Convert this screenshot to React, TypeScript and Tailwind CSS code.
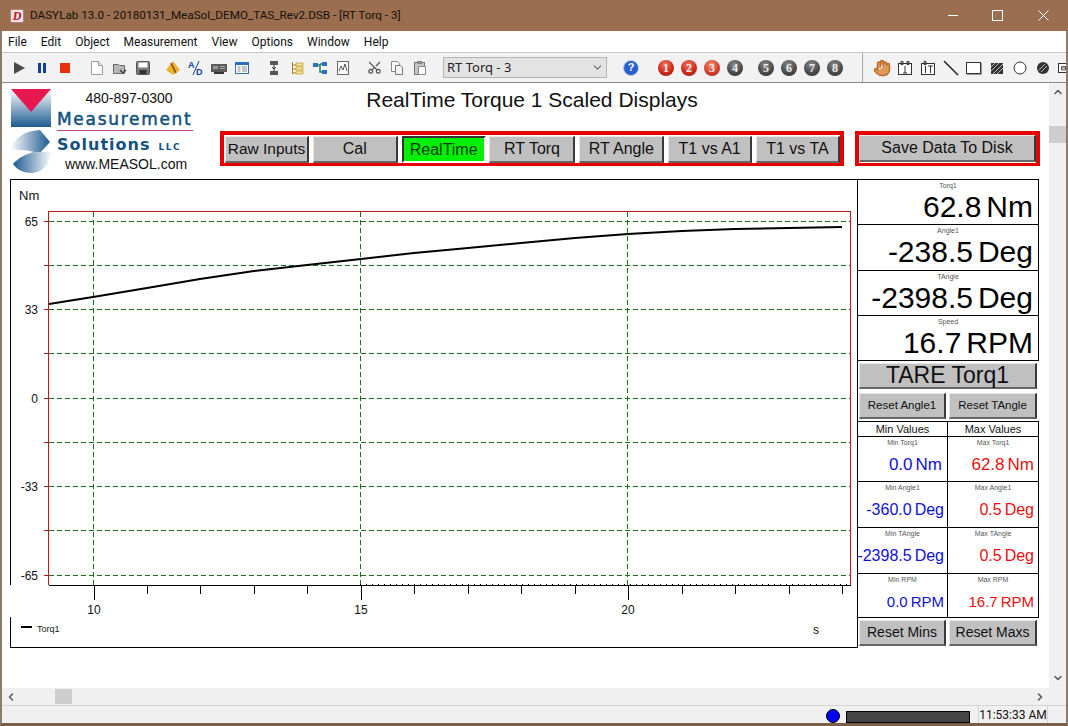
import { ChevronDown, ChevronLeft, ChevronRight, ChevronUp, Hand, Scissors } from 'lucide-react'

const menus = ['File', 'Edit', 'Object', 'Measurement', 'View', 'Options', 'Window', 'Help']

const navButtons = [
  { label: 'Raw Inputs', width: 'w-[84px]', size: 'text-[15.5px]' },
  { label: 'Cal', width: 'w-[85px]', size: 'text-[16px]' },
  { label: 'RealTime', width: 'w-[84px]', size: 'text-[16px]', active: true },
  { label: 'RT Torq', width: 'w-[86px]', size: 'text-[16px]' },
  { label: 'RT Angle', width: 'w-[85px]', size: 'text-[16px]' },
  { label: 'T1 vs A1', width: 'w-[84px]', size: 'text-[16px]' },
  { label: 'T1 vs TA', width: 'w-[84px]', size: 'text-[16px]' },
]

const displays = [
  { name: 'Torq1', value: '62.8', unit: 'Nm', h: 'h-[45px]' },
  { name: 'Angle1', value: '-238.5', unit: 'Deg', h: 'h-[46px]' },
  { name: 'TAngle', value: '-2398.5', unit: 'Deg', h: 'h-[45px]' },
  { name: 'Speed', value: '16.7', unit: 'RPM', h: 'h-[45px]' },
]

const minMaxRows = [
  { h: 'h-[45px]', size: 'text-[17px]', minPr: 'pr-[5px]', min: ['Min Torq1', '0.0', 'Nm'], max: ['Max Torq1', '62.8', 'Nm'] },
  { h: 'h-[46px]', size: 'text-[16px]', minPr: 'pr-[3px]', min: ['Min Angle1', '-360.0', 'Deg'], max: ['Max Angle1', '0.5', 'Deg'] },
  { h: 'h-[46px]', size: 'text-[16px]', minPr: 'pr-[3px]', min: ['Min TAngle', '-2398.5', 'Deg'], max: ['Max TAngle', '0.5', 'Deg'] },
  { h: 'h-[44px]', size: 'text-[15px]', minPr: 'pr-[3px]', min: ['Min RPM', '0.0', 'RPM'], max: ['Max RPM', '16.7', 'RPM'] },
]

const raised = 'bg-[#c0c0c0] border-t border-l border-t-[#e8e8e8] border-l-[#e8e8e8] border-r-2 border-b-2 border-r-[#3a3a3a] border-b-[#666666] flex items-center justify-center text-[#111]'

const Ico = ({ children }: { children: React.ReactNode }) => (
  <svg width="16" height="16" viewBox="0 0 16 16" className="shrink-0">{children}</svg>
)

const NumBall = ({ n, tone }: { n: number; tone: string }) => (
  <div className={`w-4 h-4 rounded-full shrink-0 flex items-center justify-center text-[12px] leading-none font-bold text-[#eeeeee] font-['Liberation_Serif',serif] ${tone}`}>
    {n}
  </div>
)

const redBall = 'bg-[radial-gradient(circle_at_45%_30%,#f07a60,#cf2a1c_55%,#8c1410)]'
const orangeBall = 'bg-[radial-gradient(circle_at_45%_30%,#f09070,#d8402c_55%,#98201a)]'
const darkBall = 'bg-[radial-gradient(circle_at_45%_30%,#8a8a8a,#4c4c4c_55%,#262626)]'

const curve = '49,304 93,297 147,288 200,279 254,271 307,265 361,259 414,253 468,248 521,243 575,238 628,234 682,231 735,229 789,228 842,227'
const gridY = [221, 265, 309, 353, 398, 442, 486, 530, 575]
const gridX = [93, 360, 627]
const minorTicks = [147, 200, 254, 307, 414, 468, 521, 575, 682, 735, 789, 842]
const majorTicks = [
  { x: 94, label: '10' },
  { x: 361, label: '15' },
  { x: 628, label: '20' },
]
const yLabels = [
  { y: 221, label: '65' },
  { y: 309, label: '33' },
  { y: 398, label: '0' },
  { y: 486, label: '-33' },
  { y: 575, label: '-65' },
]

function Chart() {
  return (
    <svg width="848" height="469" viewBox="10 179 848 469" className="shrink-0 font-['Liberation_Sans',sans-serif]">
      <g shapeRendering="crispEdges" fill="none">
        <path d="M10.5 585V179.5H857.5V647.5H10.5V617" stroke="#000" />
        {gridY.map((y) => (
          <line key={y} x1="49" x2="850" y1={y + 0.5} y2={y + 0.5} stroke="#1a6e1a" strokeDasharray="5 3" />
        ))}
        {gridX.map((x) => (
          <line key={x} x1={x + 0.5} x2={x + 0.5} y1="212" y2="585" stroke="#1a6e1a" strokeDasharray="5 3" />
        ))}
        {gridY.map((y) => (
          <line key={y} x1="44" x2="49" y1={y + 0.5} y2={y + 0.5} stroke="#c01818" />
        ))}
        <path d="M48.5 585V211.5H850.5V585" stroke="#c01818" />
        <line x1="49" x2="851" y1="585.5" y2="585.5" stroke="#000" />
        <line x1="360" x2="850" y1="584.5" y2="584.5" stroke="#000" strokeDasharray="1 5" />
        {majorTicks.map((t) => (
          <line key={t.x} x1={t.x + 0.5} x2={t.x + 0.5} y1="585" y2="600" stroke="#000" />
        ))}
        {minorTicks.map((x) => (
          <line key={x} x1={x + 0.5} x2={x + 0.5} y1="585" y2="594" stroke="#000" />
        ))}
      </g>
      <polyline points={curve} fill="none" stroke="#000" strokeWidth="2" strokeLinejoin="round" />
      <text x="19" y="200" fontSize="13" fill="#111">Nm</text>
      {yLabels.map((l) => (
        <text key={l.label} x="38" y={l.y + 4.5} fontSize="12" textAnchor="end" fill="#111">{l.label}</text>
      ))}
      {majorTicks.map((t) => (
        <text key={t.x} x={t.x} y="614" fontSize="12" textAnchor="middle" fill="#111">{t.label}</text>
      ))}
      <text x="813" y="634" fontSize="12" fill="#111">s</text>
      <rect x="21" y="626" width="11" height="2" fill="#000" />
      <text x="37" y="632" fontSize="9" fill="#222">Torq1</text>
    </svg>
  )
}

function LogoMark() {
  return (
    <svg width="44" height="86" viewBox="9 88 44 86" className="shrink-0">
      <defs>
        <linearGradient id="sq" x1="0" y1="0" x2="0" y2="1">
          <stop offset="0" stopColor="#ffffff" />
          <stop offset="1" stopColor="#1c5a92" />
        </linearGradient>
        <linearGradient id="lensA" x1="0" y1="0" x2="1" y2="0">
          <stop offset="0" stopColor="#ffffff" />
          <stop offset="1" stopColor="#1c5a92" />
        </linearGradient>
        <linearGradient id="lensB" x1="0" y1="0" x2="1" y2="0">
          <stop offset="0" stopColor="#1c5a92" />
          <stop offset="1" stopColor="#ffffff" />
        </linearGradient>
      </defs>
      <rect x="11" y="89" width="40" height="38" fill="url(#sq)" />
      <polygon points="11,89 51,89 31,112" fill="#e8174f" />
      <path d="M10 150 C14 138 24 131 40 130 L50 142 L40 153 C28 150 18 149 10 150Z" fill="url(#lensA)" />
      <path d="M13 164 C18 158 26 154 34 152 L52 152 C50 164 42 173 32 173 C24 173 17 170 13 164Z" fill="url(#lensB)" />
    </svg>
  )
}

function Toolbar() {
  return (
    <div className="h-[31px] shrink-0 bg-[#f2f2f2] border-t border-b border-t-[#c8c8c8] border-b-[#8a8a8a] flex items-center">
      <div className="flex items-center shrink-0 gap-[7px] ml-[9px]">
        <Ico><polygon points="3,2 14,8 3,14" fill="#4a4a4a" /></Ico>
        <Ico><path d="M4 3h3v10H4zM9 3h3v10H9z" fill="#123e9c" /></Ico>
        <Ico><rect x="3" y="3" width="10" height="10" fill="#e8320f" /></Ico>
      </div>
      <div className="flex items-center shrink-0 gap-[7px] ml-[16px]">
        <Ico><path d="M2.5 1.5h7l4 4v9h-11z" fill="#fff" stroke="#9a9a9a" /><path d="M9.5 1.5v4h4" fill="#e8e8e8" stroke="#9a9a9a" /></Ico>
        <Ico><path d="M1.5 4.5h5l1 1h5v8h-11z" fill="#b8b8b8" stroke="#6a6a6a" /><path d="M8 10l3 3 3-3" fill="none" stroke="#444" strokeWidth="1.5" /></Ico>
        <Ico><rect x="1.5" y="1.5" width="13" height="13" rx="1" fill="#7a7a7a" stroke="#555" /><rect x="3.5" y="2.5" width="9" height="5" fill="#fff" /><rect x="4.5" y="10" width="7" height="4" fill="#333" /></Ico>
      </div>
      <div className="flex items-center shrink-0 gap-[7px] ml-[14px]">
        <Ico><polygon points="8,1 15,10 8,15 1,10" fill="#f0b030" /><path d="M6 3l5 10" stroke="#7a4a10" strokeWidth="1.5" /></Ico>
        <Ico>
          <text x="0" y="8" fontSize="9" fontWeight="bold" fill="#123e9c" fontFamily="Liberation Sans">A</text>
          <path d="M5 15L11 1" stroke="#123e9c" />
          <text x="8" y="15" fontSize="9" fontWeight="bold" fill="#123e9c" fontFamily="Liberation Sans">D</text>
        </Ico>
        <Ico><rect x="0" y="4" width="16" height="8" fill="#5a5a5a" /><rect x="2" y="6" width="5" height="3" fill="#999" /><path d="M9 6h5v1H9zM9 8h5v1H9z" fill="#aaa" /><path d="M3 12h10v2H3z" fill="#333" /></Ico>
        <Ico><rect x="1.5" y="2.5" width="13" height="11" fill="#fff" stroke="#2a70c0" /><rect x="1.5" y="2.5" width="13" height="2.5" fill="#2a70c0" /><path d="M3.5 7h3M3.5 9h3M3.5 11h3M8 7h5M8 9h5M8 11h5" stroke="#7a8a9a" /></Ico>
      </div>
      <div className="flex items-center shrink-0 gap-[7px] ml-[16px]">
        <Ico><rect x="4" y="1" width="8" height="4" fill="#555" /><rect x="4" y="11" width="8" height="4" fill="#555" /><path d="M8 5v6M6 7l2 2 2-2" stroke="#333" fill="none" /></Ico>
        <Ico><path d="M3.5 2v12M3.5 5H7M3.5 9H7M3.5 13H7" stroke="#a08020" fill="none" /><path d="M7 3h7v3H7zM7 7h7v3H7zM7 11h7v3H7z" fill="#f8e090" stroke="#c09820" strokeWidth="0.7" /></Ico>
        <Ico><rect x="1" y="3" width="5" height="4" fill="#2a70c0" /><rect x="10" y="2" width="5" height="4" fill="#2a70c0" /><rect x="10" y="10" width="5" height="4" fill="#2a70c0" /><path d="M6 5h2v7h2M8 4h2" stroke="#208040" strokeWidth="1.5" fill="none" /></Ico>
        <Ico><rect x="2.5" y="1.5" width="11" height="13" fill="#fff" stroke="#666" /><path d="M4 11l2-5 2 4 2-6 2 7" fill="none" stroke="#555" /></Ico>
      </div>
      <div className="flex items-center shrink-0 gap-[7px] ml-[15px]">
        <div className="w-4 flex justify-center"><Scissors size={15} color="#555" className="rotate-[-90deg]" /></div>
        <Ico><path d="M2.5 1.5h6l2 2v8h-8z" fill="#fff" stroke="#888" /><path d="M6.5 5.5h5l2 2v7h-7z" fill="#f4f4f4" stroke="#777" /></Ico>
        <Ico><rect x="2.5" y="2.5" width="10" height="12" fill="#c4c4c4" stroke="#777" /><rect x="5" y="1" width="5" height="3" fill="#888" /><path d="M6.5 6.5h7v8h-7z" fill="#fff" stroke="#888" /></Ico>
      </div>
      <div className="ml-[15px] w-[164px] h-[21px] shrink-0 bg-[#e3e3e3] border border-[#b4b4b4] flex items-center justify-between pl-[3px] pr-[2px] text-[13px] text-[#222] font-['Noto_Sans',sans-serif]">
        <span>RT Torq - 3</span>
        <ChevronDown size={13} color="#666" />
      </div>
      <div className="ml-[16px] w-4 h-4 shrink-0 rounded-full bg-[#2a5ed0] border border-[#b8c8e8] flex items-center justify-center text-white text-[11px] font-bold leading-none font-['Liberation_Sans',sans-serif]">?</div>
      <div className="flex items-center shrink-0 gap-[7px] ml-[19px]">
        <NumBall n={1} tone={redBall} />
        <NumBall n={2} tone={redBall} />
        <NumBall n={3} tone={orangeBall} />
        <NumBall n={4} tone={darkBall} />
      </div>
      <div className="flex items-center shrink-0 gap-[7px] ml-[15px]">
        <NumBall n={5} tone={darkBall} />
        <NumBall n={6} tone={darkBall} />
        <NumBall n={7} tone={darkBall} />
        <NumBall n={8} tone={darkBall} />
      </div>
      <div className="ml-[19px] w-px h-[29px] bg-[#a8a8a8] shrink-0" />
      <div className="flex-1 min-w-0 flex items-center gap-[7px] ml-[11px] overflow-hidden">
        <div className="w-4 shrink-0 flex justify-center"><Hand size={18} fill="#e09a58" color="#b86a28" className="shrink-0" /></div>
        <Ico><rect x="1.5" y="3.5" width="13" height="11" fill="#fff" stroke="#333" /><path d="M4 1.5h2v3H4zM10 1.5h2v3h-2zM8 6v7M6 13h4" stroke="#333" fill="none" /></Ico>
        <Ico><rect x="1.5" y="3.5" width="13" height="11" fill="#fff" stroke="#333" /><path d="M4 1.5h2v3H4zM5.5 6v7M8 6h5M10.5 6v7" stroke="#333" fill="none" /></Ico>
        <Ico><line x1="1" y1="1" x2="15" y2="15" stroke="#222" strokeWidth="1.5" /></Ico>
        <Ico><rect x="0.5" y="2.5" width="14" height="11" fill="#fff" stroke="#333" /><path d="M15.5 3v11.5H1" stroke="#999" fill="none" /></Ico>
        <Ico><rect x="2" y="3" width="12" height="11" fill="#333" /><path d="M2 7l4-4M2 11l8-8M4 14l10-10M8 14l6-6" stroke="#bbb" /></Ico>
        <Ico><circle cx="8" cy="8" r="6" fill="#fff" stroke="#333" /></Ico>
        <Ico><circle cx="8" cy="8" r="6" fill="#333" /><path d="M4 10l6-6M6 12l6-6" stroke="#bbb" /></Ico>
        <Ico><rect x="0.5" y="3.5" width="11" height="9" fill="#fff" stroke="#333" /><path d="M3.5 6.5h4v3.5h-4zM3.5 8h4" stroke="#333" fill="none" strokeWidth="0.8" /></Ico>
      </div>
    </div>
  )
}

export default function App() {
  return (
    <div className="w-[1068px] h-[726px] overflow-hidden flex flex-col bg-white font-['Liberation_Sans',sans-serif]">
      {/* title bar */}
      <div className="h-[31px] shrink-0 bg-[#9a6e4e] flex items-center font-['Roboto',sans-serif] text-[11.7px] text-[#141008]">
        <div className="ml-[10px] w-[14px] h-[14px] bg-[#f4e4e4] border border-[#b08080] rounded-[2px] flex items-center justify-center text-[#c01020] text-[12px] font-bold italic leading-none font-['Liberation_Serif',serif]">D</div>
        <span className="ml-[6px]">DASYLab 13.0 - 20180131_MeaSol_DEMO_TAS_Rev2.DSB - [RT Torq - 3]</span>
        <svg width="120" height="16" viewBox="0 0 120 16" className="ml-auto mr-[17px]" fill="none" stroke="#fff">
          <path d="M17 7.5h10" />
          <rect x="61.5" y="2.5" width="10" height="10" />
          <path d="M107.5 2.5l10 10M117.5 2.5l-10 10" />
        </svg>
      </div>
      <div className="flex-1 min-h-0 flex flex-col border-l-2 border-r-2 border-b-[3px] border-l-[#8a7b6e] border-r-[#8a7b6e] border-b-[#7b5e48]">
        {/* menu */}
        <div className="h-[21px] shrink-0 bg-white flex items-center gap-[14px] pl-[6px] text-[12px] text-[#111] font-['Roboto',sans-serif]">
          {menus.map((m) => (
            <span key={m}>{m}</span>
          ))}
        </div>
        <Toolbar />
        {/* document area */}
        <div className="flex-1 min-h-0 flex">
          <div className="flex-1 min-w-0 bg-white flex flex-col">
            <div className="h-[96px] shrink-0 flex">
              <div className="w-[218px] shrink-0 flex items-start pl-[7px] pt-[5px]">
                <LogoMark />
                <div className="ml-[4px] w-[136px] flex flex-col text-center">
                  <div className="text-[14px] leading-[16px] mt-[2px] pl-[8px] text-[#111]">480-897-0300</div>
                  <div className="text-[17px] leading-[20px] mt-[3px] tracking-[1.7px] [-webkit-text-stroke:0.5px_#13517f] text-[#13517f] text-left whitespace-nowrap font-['DejaVu_Sans',sans-serif]">Measurement</div>
                  <div className="h-px bg-[#c04878] mt-[1px]" />
                  <div className="flex items-baseline mt-[4px] whitespace-nowrap font-bold text-[#13517f] font-['DejaVu_Sans',sans-serif]">
                    <span className="text-[16px] leading-[19px] tracking-[1px]">Solutions</span>
                    <span className="text-[9px] ml-[8px] tracking-[1.5px]">LLC</span>
                  </div>
                  <div className="text-[14px] leading-[16px] mt-[1px] pl-[8px] text-left whitespace-nowrap text-[#111]">www.MEASOL.com</div>
                </div>
              </div>
              <div className="flex flex-col">
                <div className="h-[48px] w-[624px] pt-[5px] text-center text-[21px] leading-[24px] text-[#111]">RealTime Torque 1 Scaled Displays</div>
                <div className="flex gap-[11px]">
                  <div className="w-[624px] h-[35px] bg-white border-[4px] border-b-[3px] border-[#e80000] pl-px pt-px flex justify-between">
                    {navButtons.map((b) => (
                      <div
                        key={b.label}
                        className={`${b.width} ${b.size} h-[27px] whitespace-nowrap ${
                          b.active
                            ? 'bg-[#00f000] border-2 border-t-[#333] border-l-[#333] border-r-white border-b-white flex items-center justify-center text-[#0a3a0a]'
                            : raised
                        }`}
                      >
                        {b.label}
                      </div>
                    ))}
                  </div>
                  <div className="w-[185px] h-[35px] bg-white border-[4px] border-b-[3px] border-[#e80000]">
                    <div className={`${raised} w-[177px] h-[27px] text-[16px]`}>Save Data To Disk</div>
                  </div>
                </div>
              </div>
            </div>
            <div className="flex pl-[8px]">
              <Chart />
              <div className="w-[182px] -ml-px shrink-0 flex flex-col">
                <div className="border border-black border-b-0">
                  {displays.map((d) => (
                    <div key={d.name} className={`${d.h} border-b border-black flex flex-col overflow-hidden`}>
                      <div className="text-[7px] leading-[10px] text-center text-[#555] mt-px">{d.name}</div>
                      <div className="flex justify-end items-baseline gap-[5px] pr-[5px] text-[30px] leading-[32px] text-black whitespace-nowrap">
                        <span>{d.value}</span>
                        <span>{d.unit}</span>
                      </div>
                    </div>
                  ))}
                </div>
                <div className={`${raised} ml-[2px] w-[178px] h-[26px] mt-[2px] text-[23px]`}>TARE Torq1</div>
                <div className="flex ml-[2px] gap-[3px] mt-[4px]">
                  <div className={`${raised} w-[87px] h-[26px] text-[11.5px]`}>Reset Angle1</div>
                  <div className={`${raised} w-[88px] h-[26px] text-[11.5px]`}>Reset TAngle</div>
                </div>
                <div className="mt-[2px] border border-black border-b-0">
                  <div className="grid grid-cols-[90px_1fr] h-[15px] border-b border-black text-[11px] leading-[14px] text-center text-[#111]">
                    <div className="border-r border-black">Min Values</div>
                    <div>Max Values</div>
                  </div>
                  {minMaxRows.map((r) => (
                    <div key={r.min[0]} className={`${r.h} grid grid-cols-[90px_1fr] border-b border-black`}>
                      <div className="border-r border-black flex flex-col overflow-hidden">
                        <div className="text-[7px] leading-[9px] text-center text-[#555] mt-px">{r.min[0]}</div>
                        <div className={`${r.size} ${r.minPr} mt-[8px] flex justify-end items-baseline gap-[3px] leading-[20px] text-[#1010d8] whitespace-nowrap`}>
                          <span>{r.min[1]}</span>
                          <span>{r.min[2]}</span>
                        </div>
                      </div>
                      <div className="flex flex-col overflow-hidden">
                        <div className="text-[7px] leading-[9px] text-center text-[#555] mt-px">{r.max[0]}</div>
                        <div className={`${r.size} mt-[8px] flex justify-end items-baseline gap-[3px] pr-[4px] leading-[20px] text-[#e81010] whitespace-nowrap`}>
                          <span>{r.max[1]}</span>
                          <span>{r.max[2]}</span>
                        </div>
                      </div>
                    </div>
                  ))}
                </div>
                <div className="flex ml-[2px] gap-[3px] mt-[2px]">
                  <div className={`${raised} w-[87px] h-[26px] text-[14px]`}>Reset Mins</div>
                  <div className={`${raised} w-[88px] h-[26px] text-[14px]`}>Reset Maxs</div>
                </div>
              </div>
            </div>
          </div>
          {/* vertical scrollbar */}
          <div className="w-[17px] shrink-0 bg-[#f0f0f0] flex flex-col items-center">
            <div className="h-[18px] flex items-center"><ChevronUp size={12} strokeWidth={3} color="#555" /></div>
            <div className="w-full h-[17px] mt-[25px] bg-[#cdcdcd]" />
            <div className="mt-auto h-[21px] flex items-center"><ChevronDown size={12} strokeWidth={3} color="#555" /></div>
          </div>
        </div>
        {/* horizontal scrollbar */}
        <div className="h-[17px] shrink-0 bg-[#f0f0f0] flex items-center">
          <div className="w-[18px] flex justify-center"><ChevronLeft size={12} strokeWidth={3} color="#555" /></div>
          <div className="ml-[35px] w-[17px] h-[15px] bg-[#cdcdcd]" />
          <div className="ml-auto mr-[18px] w-[12px] flex justify-center -translate-x-[2px]"><ChevronRight size={12} strokeWidth={3} color="#555" /></div>
        </div>
        {/* status bar */}
        <div className="h-[18px] shrink-0 bg-[#f0f0f0] border-t border-[#d4d4d4] flex items-end justify-end text-[12px] text-[#111] font-['Roboto',sans-serif]">
          <div className="w-[14px] h-[14px] rounded-full bg-[#0000f0] border border-black" />
          <div className="ml-[6px] w-[124px] h-[12px] bg-[#444444] border border-black" />
          <div className="ml-[8px] w-[70px] h-full border-l border-r border-[#d4d4d4] flex items-center justify-center whitespace-nowrap">11:53:33 AM</div>
          <div className="w-[18px]" />
        </div>
      </div>
    </div>
  )
}
